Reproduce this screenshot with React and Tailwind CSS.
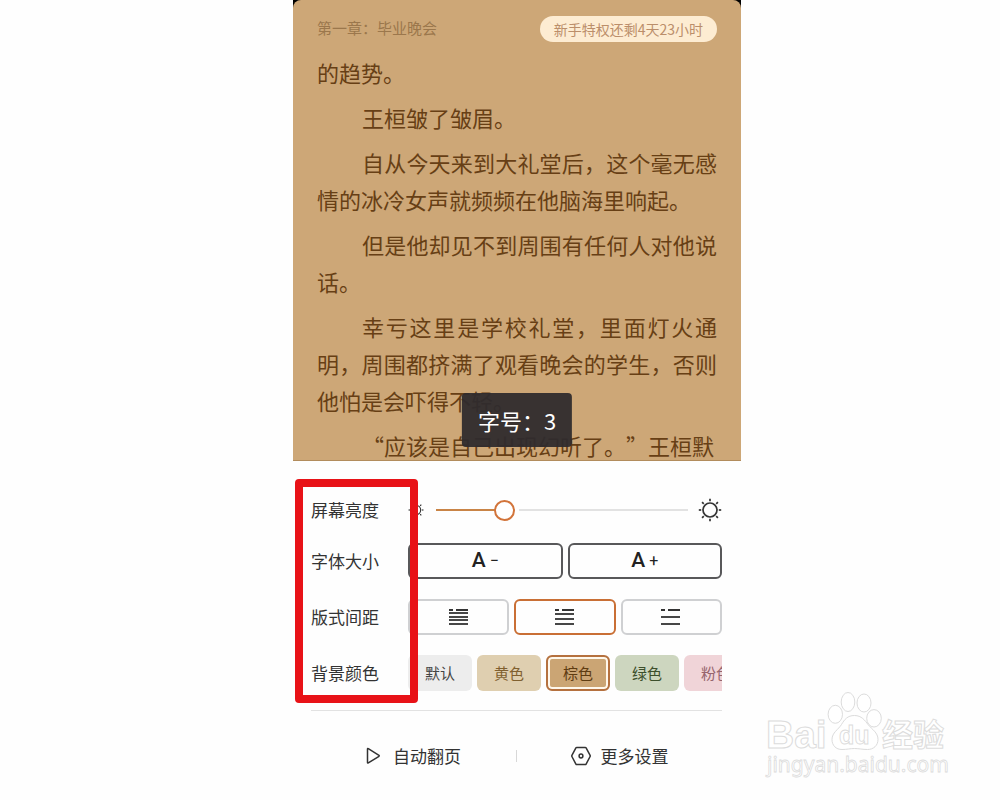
import { useState } from "react";
import clsx from "clsx";

const paragraphs = [
  { text: "的趋势。", indent: false },
  { text: "王桓皱了皱眉。", indent: true },
  {
    text: "自从今天来到大礼堂后，这个毫无感情的冰冷女声就频频在他脑海里响起。",
    indent: true,
  },
  { text: "但是他却见不到周围有任何人对他说话。", indent: true },
  {
    text: "幸亏这里是学校礼堂，里面灯火通明，周围都挤满了观看晚会的学生，否则他怕是会吓得不轻。",
    indent: true,
  },
  { text: "“应该是自己出现幻听了。”王桓默", indent: true },
];

const spacings = [
  { id: "compact", label: "紧凑间距", rows: [2, 5, 9, 12, 16] },
  { id: "normal", label: "标准间距", rows: [2, 6, 11, 16] },
  { id: "loose", label: "宽松间距", rows: [2, 9, 16] },
];

const colors = [
  { id: "default", label: "默认", style: "bg-[#ededed] text-[#444]" },
  { id: "yellow", label: "黄色", style: "bg-[#dfcfb0] text-[#80602f]" },
  { id: "brown", label: "棕色", style: "bg-[#cba574] text-[#5e3c12]" },
  { id: "green", label: "绿色", style: "bg-[#cdd6bf] text-[#3d4f2c]" },
  { id: "pink", label: "粉色", style: "bg-[#f0d4d8] text-[#96656d]" },
];

function Sun({ className }) {
  const angles = [0, 45, 90, 135, 180, 225, 270, 315];
  return (
    <svg viewBox="0 0 24 24" className={className} fill="none" stroke="#333" strokeWidth="1.7">
      <circle cx="12" cy="12" r="7" />
      {angles.map((angle) => (
        <path key={angle} d="M12 .8v2.4" transform={`rotate(${angle} 12 12)`} />
      ))}
    </svg>
  );
}

function SpacingIcon({ rows }) {
  return (
    <svg width="20" height="18" viewBox="0 0 20 18" stroke="#333" strokeWidth="1.8">
      <path d={`M0 ${rows[0]}h4M7 ${rows[0]}h12`} />
      {rows.slice(1).map((y) => (
        <path key={y} d={`M0 ${y}h19`} />
      ))}
    </svg>
  );
}

function Row({ label, htmlFor, children }) {
  return (
    <div className="flex items-center">
      {htmlFor ? (
        <label htmlFor={htmlFor} className="w-[97px] shrink-0 text-[17px] leading-6">
          {label}
        </label>
      ) : (
        <span className="w-[97px] shrink-0 text-[17px] leading-6">{label}</span>
      )}
      <div className="min-w-0 flex-1">{children}</div>
    </div>
  );
}

function Reader({ fontLevel }) {
  return (
    <div className="bg-black">
      <section className="relative overflow-hidden rounded-t-lg border-b border-[#b28c5c] bg-[#cda777] px-6">
        <header className="flex items-start justify-between pt-4">
          <h1 className="text-[15px] leading-6 text-[#9b774c]">第一章：毕业晚会</h1>
          <a
            href="#privilege"
            className="rounded-full bg-[#fdecd2] px-3.5 text-sm leading-[26px] text-[#bb8e6a]"
          >
            新手特权还剩4天23小时
          </a>
        </header>
        <div className="-mb-1 space-y-2 pt-3 text-justify text-[22px] leading-[37px] text-[#673f15] [text-spacing-trim:space-all]">
          {paragraphs.map((p) => (
            <p key={p.text} className={clsx(p.indent && "indent-[45px]")}>
              {p.text}
            </p>
          ))}
        </div>
        <div
          role="status"
          className="absolute bottom-[13px] left-1/2 -translate-x-1/2 rounded bg-[#2f2b2d]/95 px-4 text-[22px] leading-[54px] whitespace-nowrap text-white"
        >
          字号：{fontLevel}
        </div>
      </section>
    </div>
  );
}

function Settings({ onFontChange }) {
  const [brightness, setBrightness] = useState(25);
  const [spacing, setSpacing] = useState("normal");
  const [color, setColor] = useState("brown");

  return (
    <section className="relative pr-[19px] pl-[18px] text-[#333]">
      <div className="flex flex-col gap-5 pt-9">
        <Row label="屏幕亮度" htmlFor="brightness">
          <div className="flex h-[26px] items-center">
            <Sun className="h-4 w-4" />
            <input
              id="brightness"
              type="range"
              value={brightness}
              onChange={(e) => setBrightness(Number(e.target.value))}
              className="mr-2.5 ml-3 h-0.5 min-w-0 flex-1 appearance-none outline-none [&::-webkit-slider-thumb]:h-[21px] [&::-webkit-slider-thumb]:w-[21px] [&::-webkit-slider-thumb]:appearance-none [&::-webkit-slider-thumb]:rounded-full [&::-webkit-slider-thumb]:border-2 [&::-webkit-slider-thumb]:border-[#d2743a] [&::-webkit-slider-thumb]:bg-white"
              style={{
                background: `linear-gradient(to right, #c98446 ${brightness + 3}%, transparent ${brightness + 3}% ${brightness + 8}%, #e2e2e2 ${brightness + 8}%)`,
              }}
            />
            <Sun className="h-6 w-6" />
          </div>
        </Row>

        <Row label="字体大小">
          <div className="flex gap-[5px]">
            {[
              { sign: "−", step: -1 },
              { sign: "+", step: 1 },
            ].map(({ sign, step }) => (
              <button
                key={sign}
                onClick={() => onFontChange(step)}
                className="flex h-9 flex-1 items-center justify-center gap-1 rounded-md border-2 border-[#58585a] font-['Roboto',sans-serif] text-[21px] font-medium text-[#222]"
              >
                A<span className="text-base font-normal">{sign}</span>
              </button>
            ))}
          </div>
        </Row>

        <Row label="版式间距">
          <div className="flex gap-[5px]">
            {spacings.map(({ id, label, rows }) => (
              <button
                key={id}
                aria-label={label}
                onClick={() => setSpacing(id)}
                className={clsx(
                  "flex h-9 flex-1 items-center justify-center rounded-md border-2",
                  spacing === id ? "border-[#c96f35]" : "border-[#cfd0d2]"
                )}
              >
                <SpacingIcon rows={rows} />
              </button>
            ))}
          </div>
        </Row>

        <Row label="背景颜色">
          <div className="flex gap-[5px] overflow-hidden">
            {colors.map(({ id, label, style }) => (
              <button
                key={id}
                onClick={() => setColor(id)}
                className={clsx(
                  "h-9 w-16 shrink-0 rounded-md text-[15px]",
                  style,
                  color === id &&
                    "border-2 border-[#b5713f] inset-ring-2 inset-ring-[#fff8ec]"
                )}
              >
                {label}
              </button>
            ))}
          </div>
        </Row>
      </div>

      <footer className="mt-[19px] flex items-center border-t border-[#e2e2e2] pt-[31px]">
        <button className="flex flex-1 items-center justify-center gap-3 text-[17px] leading-7">
          <svg width="15" height="18" viewBox="0 0 15 18" fill="none" stroke="#333" strokeWidth="1.5" strokeLinejoin="round">
            <path d="M1.5 2v13.6q0 .8.8.3L13 9.3q.5-.5 0-1L2.3 1.7q-.8-.5-.8.3Z" />
          </svg>
          自动翻页
        </button>
        <span className="h-3 w-px bg-[#d8d8d8]" />
        <button className="flex flex-1 items-center justify-center gap-2.5 text-[17px] leading-7">
          <svg width="20" height="20" viewBox="0 0 20 20" fill="none" stroke="#333" strokeWidth="1.5" strokeLinejoin="round">
            <path d="M5.8 1.4h8.4q.6 0 .9.5l4 7.4q.3.6 0 1.2l-4 7.6q-.3.5-.9.5H5.8q-.6 0-.9-.5l-4-7.6q-.3-.6 0-1.2l4-7.4q.3-.5.9-.5Z" />
            <circle cx="10" cy="10" r="1.9" />
          </svg>
          更多设置
        </button>
      </footer>

      {/* highlight around the row labels */}
      <div className="pointer-events-none absolute top-[18px] left-0.5 h-56 w-[123px] rounded border-8 border-[#e81217]" />
    </section>
  );
}

function Watermark() {
  return (
    <svg
      width="186"
      height="96"
      viewBox="0 0 186 96"
      className="pointer-events-none absolute right-[50px] bottom-4"
      fill="#fff"
      stroke="#dcdcdc"
      strokeWidth="1"
    >
      <text x="2" y="60" fontSize="39" fontWeight="700" fontFamily="Liberation Sans, sans-serif">
        Bai
      </text>
      <ellipse cx="71.3" cy="26.3" rx="7.2" ry="9" />
      <ellipse cx="84" cy="14" rx="6.8" ry="9.5" />
      <ellipse cx="100" cy="15" rx="7" ry="9" />
      <ellipse cx="110" cy="30.3" rx="7.3" ry="8.7" />
      <path d="M90.500 27.500c-7 0-10 4-13 9-3 5-9.500 8-9.500 15 0 6 4 10 10 10 5 0 8-1 12.500-1s8 1 13 1c6 0 10.500-4 10.500-10 0-7-6-10-10-15-3-4-6.500-9-13.500-9Z" />
      <text x="75" y="56" fontSize="25" fontWeight="700" strokeWidth=".9" fontFamily="Liberation Sans, sans-serif">
        du
      </text>
      <text x="118" y="58" fontSize="31" fontWeight="700" fontFamily="Noto Sans CJK SC, sans-serif">
        经验
      </text>
      <text x="3" y="84" fontSize="21" strokeWidth=".8" fontFamily="Noto Sans, sans-serif">
        jingyan.baidu.com
      </text>
    </svg>
  );
}

export default function App() {
  const [fontLevel, setFontLevel] = useState(3);

  return (
    <main
      lang="zh-CN"
      className="relative flex min-h-screen justify-center bg-[#fefefe] pl-[34px] font-['Noto_Sans_CJK_SC',sans-serif]"
    >
      <div className="w-full max-w-md">
        <Reader fontLevel={fontLevel} />
        <Settings onFontChange={(step) => setFontLevel(Math.max(1, fontLevel + step))} />
      </div>
      <Watermark />
    </main>
  );
}
